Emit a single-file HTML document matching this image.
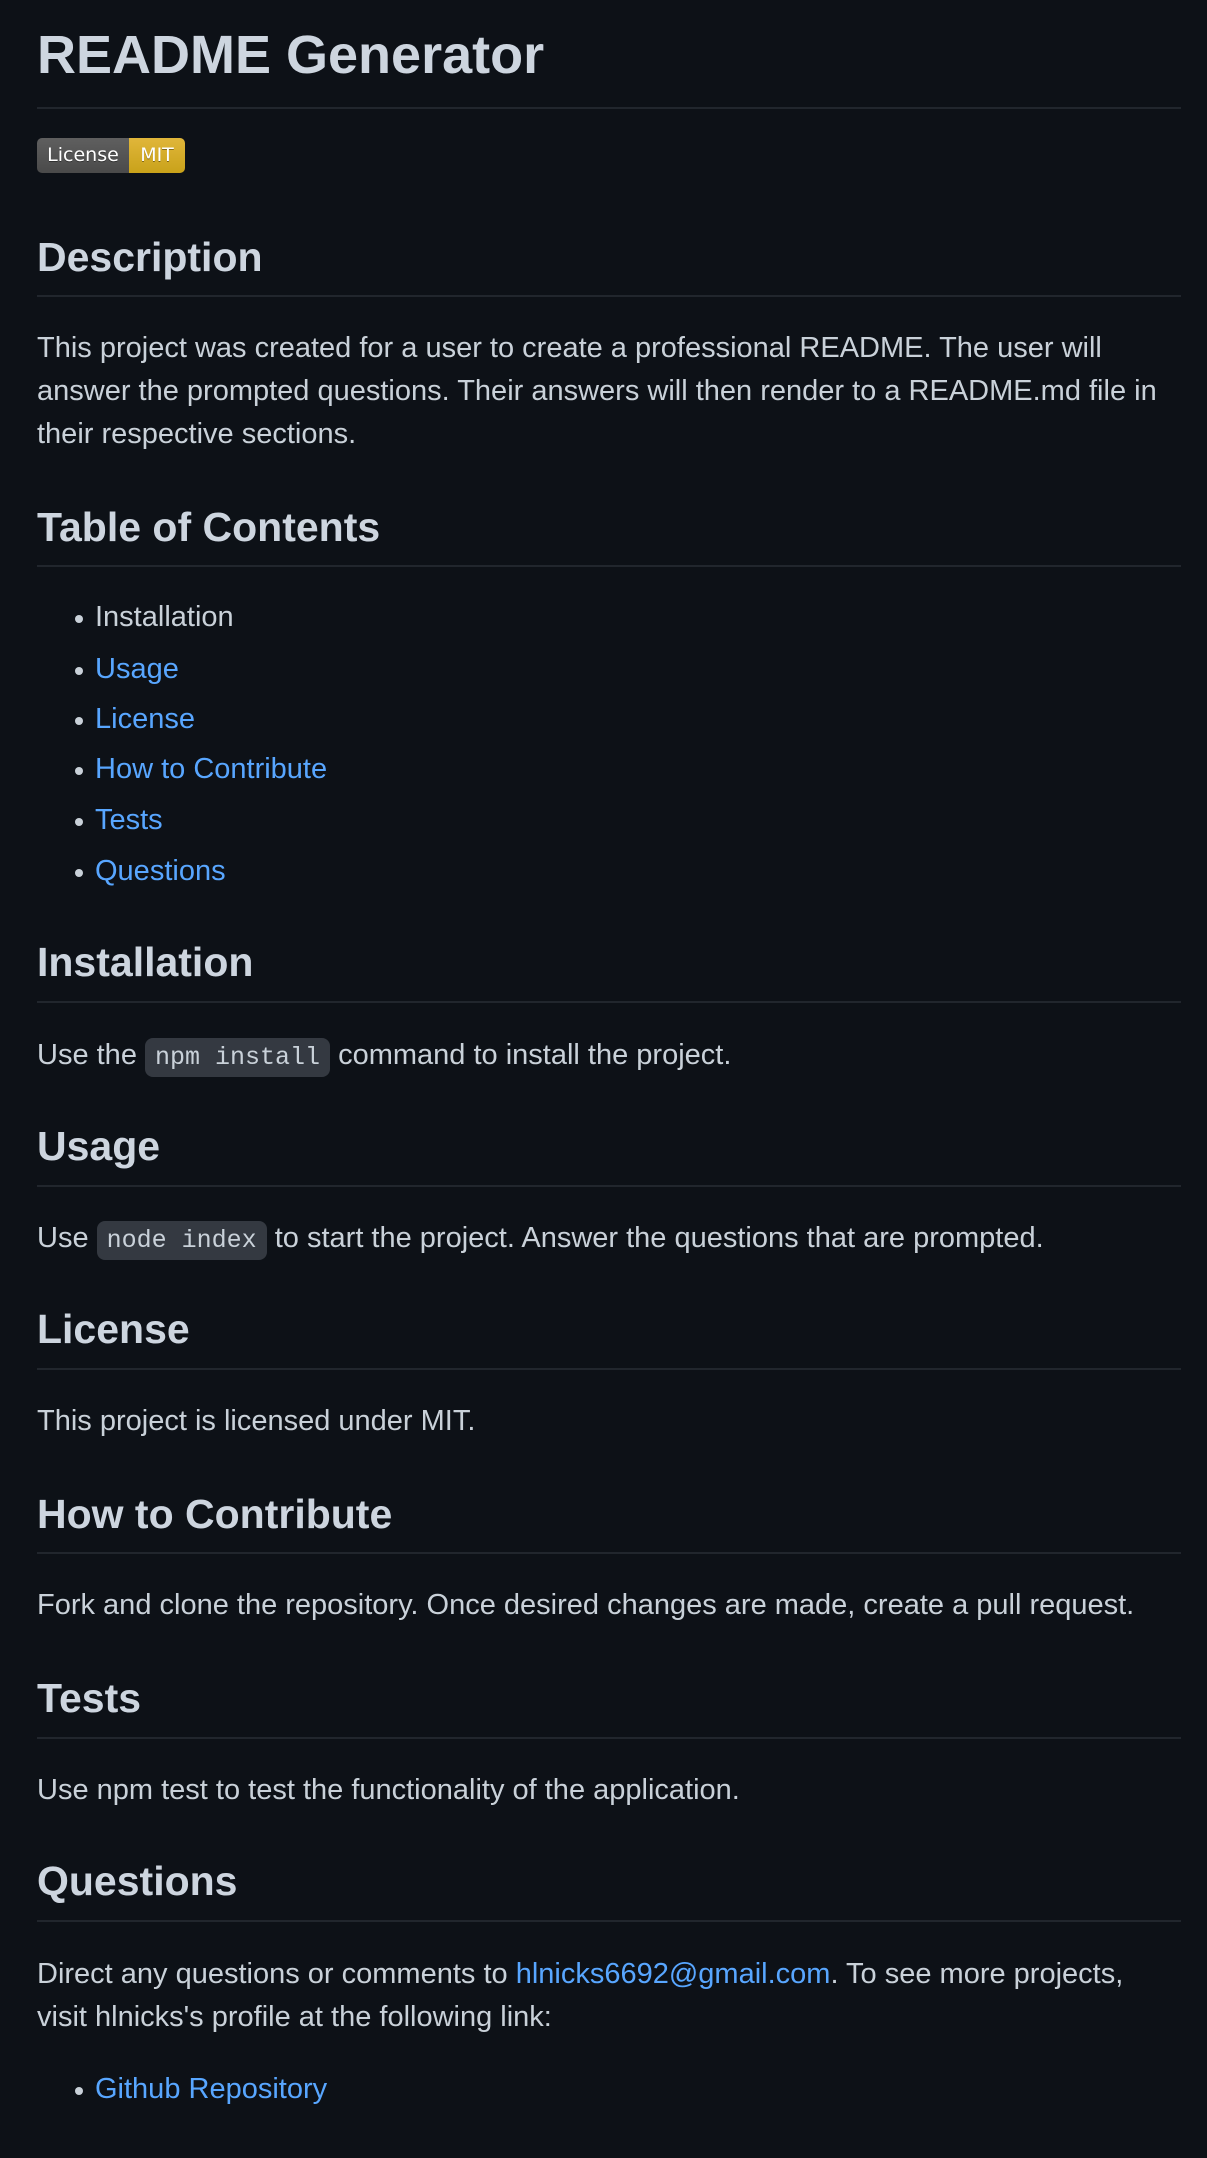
<!DOCTYPE html>
<html><head><meta charset="utf-8"><style>
html,body{margin:0;padding:0;background:#0d1117;}
body{width:1207px;height:2158px;position:relative;overflow:hidden;font-family:"Liberation Sans",sans-serif;color:#c9d1d9;}
.a{position:absolute;left:37px;white-space:nowrap;}
.h1,.h2{font-weight:700;color:#cdd5df;}
.h1{font-size:54px;line-height:70px;}
.h2{font-size:41px;line-height:54px;}
.hr{position:absolute;left:37px;width:1144px;height:2px;background:#21262d;}
.p{font-size:29px;line-height:43px;}
.l{color:#58a6ff;}
code{font-family:"Liberation Mono",monospace;font-size:25px;background:#343941;border-radius:8px;padding:5px 10px;}
.li{position:absolute;left:95px;font-size:29px;line-height:43px;white-space:nowrap;}
.li:before{content:"";position:absolute;left:-20px;top:19px;width:8px;height:8px;border-radius:50%;background:#c9d1d9;}
.badge{position:absolute;left:37px;top:138px;height:35px;width:148px;border-radius:5px;overflow:hidden;font-family:"DejaVu Sans",sans-serif;font-size:19px;line-height:35px;color:#fff;text-shadow:0 1px 0 rgba(0,0,0,.4);}
.badge span{position:absolute;top:0;height:35px;text-align:center;}
</style></head><body>
<div class="a h1" style="top:20px">README Generator</div>
<div class="hr" style="top:107px"></div>
<div class="badge"><span style="left:0;width:92px;background:linear-gradient(#5f5f5f,#4a4a4a)">License</span><span style="left:92px;width:56px;background:linear-gradient(#e0b63a,#c9a21a)">MIT</span></div>

<div class="a h2" style="top:230px">Description</div>
<div class="hr" style="top:295px"></div>
<div class="a p" style="top:327px">This project was created for a user to create a professional README. The user will<br>answer the prompted questions. Their answers will then render to a README.md file in<br>their respective sections.</div>

<div class="a h2" style="top:500px">Table of Contents</div>
<div class="hr" style="top:565px"></div>
<div class="li" style="top:596px">Installation</div>
<div class="li l" style="top:648px">Usage</div>
<div class="li l" style="top:698px">License</div>
<div class="li l" style="top:748px">How to Contribute</div>
<div class="li l" style="top:799px">Tests</div>
<div class="li l" style="top:850px">Questions</div>

<div class="a h2" style="top:935px">Installation</div>
<div class="hr" style="top:1001px"></div>
<div class="a p" style="top:1034px">Use the <code>npm install</code> command to install the project.</div>

<div class="a h2" style="top:1119px">Usage</div>
<div class="hr" style="top:1185px"></div>
<div class="a p" style="top:1217px">Use <code>node index</code> to start the project. Answer the questions that are prompted.</div>

<div class="a h2" style="top:1302px">License</div>
<div class="hr" style="top:1368px"></div>
<div class="a p" style="top:1400px">This project is licensed under MIT.</div>

<div class="a h2" style="top:1487px">How to Contribute</div>
<div class="hr" style="top:1552px"></div>
<div class="a p" style="top:1584px">Fork and clone the repository. Once desired changes are made, create a pull request.</div>

<div class="a h2" style="top:1671px">Tests</div>
<div class="hr" style="top:1737px"></div>
<div class="a p" style="top:1769px">Use npm test to test the functionality of the application.</div>

<div class="a h2" style="top:1854px">Questions</div>
<div class="hr" style="top:1920px"></div>
<div class="a p" style="top:1953px">Direct any questions or comments to <span class="l">hlnicks6692@gmail.com</span>. To see more projects,<br>visit hlnicks's profile at the following link:</div>
<div class="li l" style="top:2068px">Github Repository</div>
</body></html>
